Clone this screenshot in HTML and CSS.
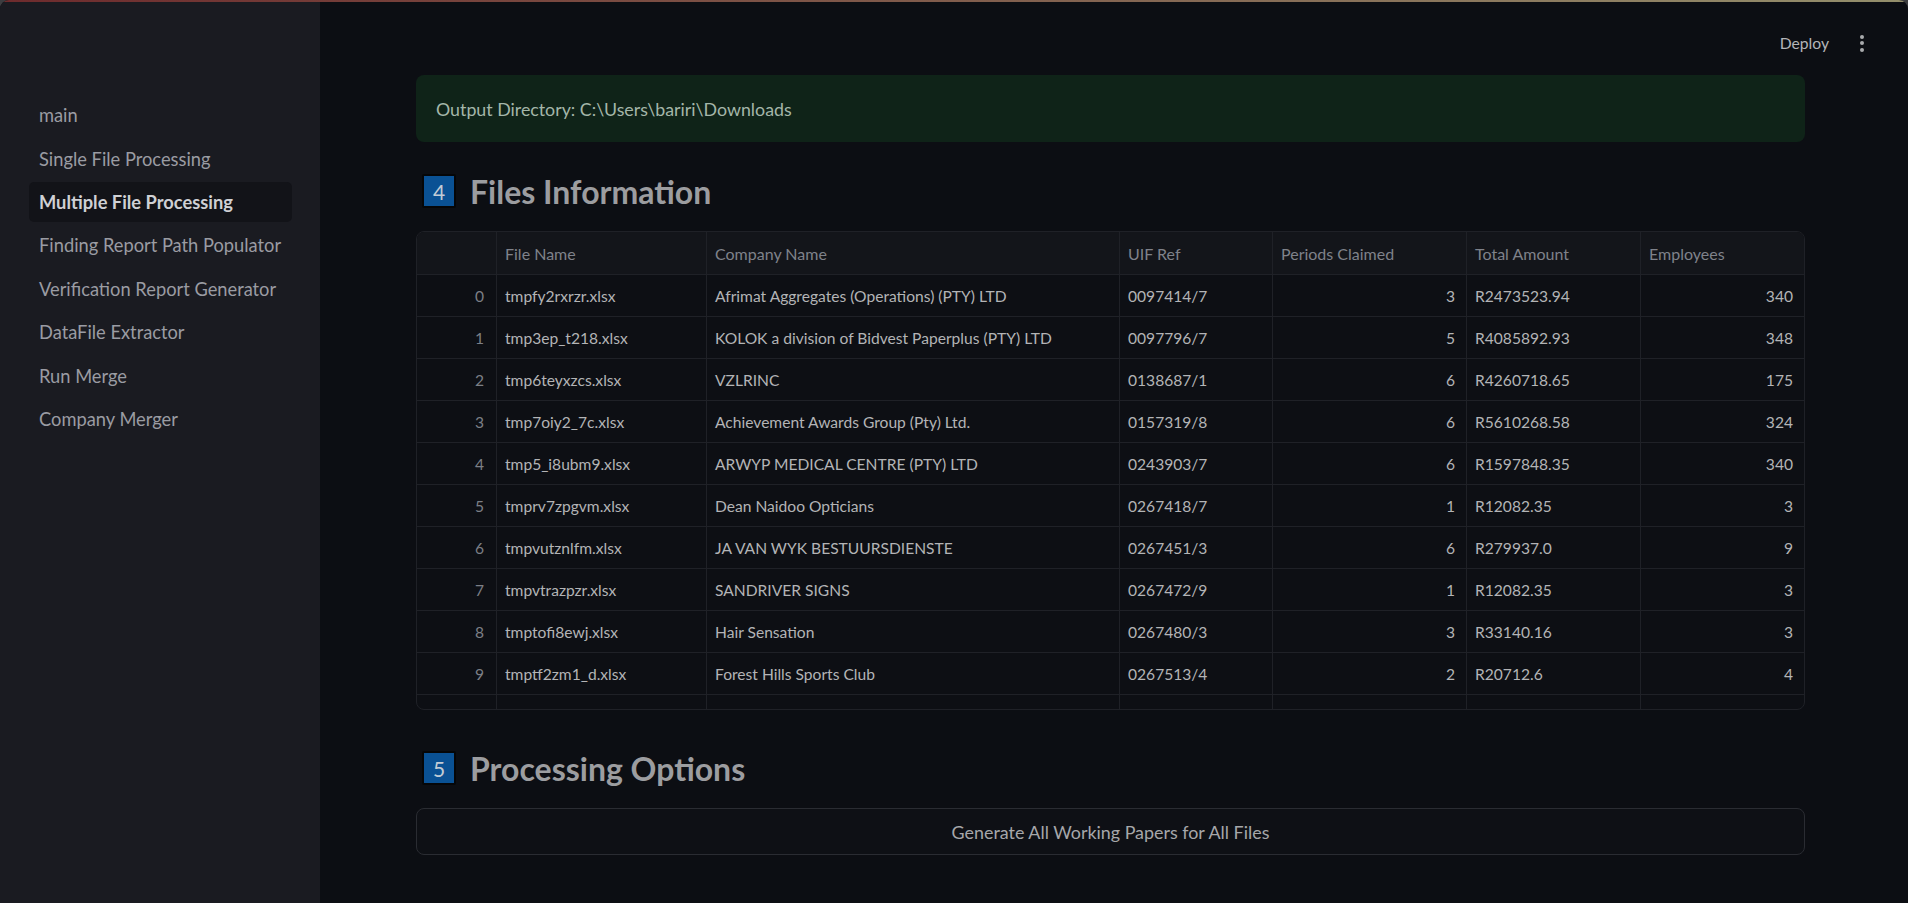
FILE: index.html
```html
<!DOCTYPE html>
<html lang="en">
<head>
<meta charset="utf-8">
<title>Multiple File Processing</title>
<link rel="stylesheet" href="styles.css">
</head>
<body>
<div class="app">
  <div class="decoration"></div>
  <aside class="sidebar">
    <nav class="nav">
      <a class="nav-item">main</a>
      <a class="nav-item">Single File Processing</a>
      <a class="nav-item active">Multiple File Processing</a>
      <a class="nav-item">Finding Report Path Populator</a>
      <a class="nav-item">Verification Report Generator</a>
      <a class="nav-item">DataFile Extractor</a>
      <a class="nav-item">Run Merge</a>
      <a class="nav-item">Company Merger</a>
    </nav>
  </aside>
  <main class="main">
    <div class="toolbar">
      <span class="deploy">Deploy</span>
      <span class="kebab"><i></i><i></i><i></i></span>
    </div>
    <div class="content">
      <div class="alert-success">Output Directory: C:\Users\bariri\Downloads</div>

      <h2 class="heading"><span class="keycap">4</span><span>Files Information</span></h2>

      <div class="grid-table">
        <div class="row head">
          <div class="cell idx"></div>
          <div class="cell">File Name</div>
          <div class="cell">Company Name</div>
          <div class="cell">UIF Ref</div>
          <div class="cell">Periods Claimed</div>
          <div class="cell">Total Amount</div>
          <div class="cell">Employees</div>
        </div>
        <div class="row"><div class="cell idx">0</div><div class="cell">tmpfy2rxrzr.xlsx</div><div class="cell">Afrimat Aggregates (Operations) (PTY) LTD</div><div class="cell">0097414/7</div><div class="cell num">3</div><div class="cell">R2473523.94</div><div class="cell num">340</div></div>
        <div class="row"><div class="cell idx">1</div><div class="cell">tmp3ep_t218.xlsx</div><div class="cell">KOLOK a division of Bidvest Paperplus (PTY) LTD</div><div class="cell">0097796/7</div><div class="cell num">5</div><div class="cell">R4085892.93</div><div class="cell num">348</div></div>
        <div class="row"><div class="cell idx">2</div><div class="cell">tmp6teyxzcs.xlsx</div><div class="cell">VZLRINC</div><div class="cell">0138687/1</div><div class="cell num">6</div><div class="cell">R4260718.65</div><div class="cell num">175</div></div>
        <div class="row"><div class="cell idx">3</div><div class="cell">tmp7oiy2_7c.xlsx</div><div class="cell">Achievement Awards Group (Pty) Ltd.</div><div class="cell">0157319/8</div><div class="cell num">6</div><div class="cell">R5610268.58</div><div class="cell num">324</div></div>
        <div class="row"><div class="cell idx">4</div><div class="cell">tmp5_i8ubm9.xlsx</div><div class="cell">ARWYP MEDICAL CENTRE (PTY) LTD</div><div class="cell">0243903/7</div><div class="cell num">6</div><div class="cell">R1597848.35</div><div class="cell num">340</div></div>
        <div class="row"><div class="cell idx">5</div><div class="cell">tmprv7zpgvm.xlsx</div><div class="cell">Dean Naidoo Opticians</div><div class="cell">0267418/7</div><div class="cell num">1</div><div class="cell">R12082.35</div><div class="cell num">3</div></div>
        <div class="row"><div class="cell idx">6</div><div class="cell">tmpvutznlfm.xlsx</div><div class="cell">JA VAN WYK BESTUURSDIENSTE</div><div class="cell">0267451/3</div><div class="cell num">6</div><div class="cell">R279937.0</div><div class="cell num">9</div></div>
        <div class="row"><div class="cell idx">7</div><div class="cell">tmpvtrazpzr.xlsx</div><div class="cell">SANDRIVER SIGNS</div><div class="cell">0267472/9</div><div class="cell num">1</div><div class="cell">R12082.35</div><div class="cell num">3</div></div>
        <div class="row"><div class="cell idx">8</div><div class="cell">tmptofi8ewj.xlsx</div><div class="cell">Hair Sensation</div><div class="cell">0267480/3</div><div class="cell num">3</div><div class="cell">R33140.16</div><div class="cell num">3</div></div>
        <div class="row"><div class="cell idx">9</div><div class="cell">tmptf2zm1_d.xlsx</div><div class="cell">Forest Hills Sports Club</div><div class="cell">0267513/4</div><div class="cell num">2</div><div class="cell">R20712.6</div><div class="cell num">4</div></div>
        <div class="row"><div class="cell idx">10</div><div class="cell">tmpkdhl1tbf.xlsx</div><div class="cell">Al Hilal Properties</div><div class="cell">0267521/5</div><div class="cell num">4</div><div class="cell">R54210.8</div><div class="cell num">6</div></div>
      </div>

      <h2 class="heading second"><span class="keycap">5</span><span>Processing Options</span></h2>

      <button class="btn">Generate All Working Papers for All Files</button>
    </div>
  </main>
</div>
</body>
</html>
```

FILE: styles.css
```css
* { box-sizing: border-box; }

html, body {
  margin: 0;
  padding: 0;
  background: #3c3d40;
  height: 903px;
  overflow: hidden;
}

body {
  font-family: "Lato", "Noto Sans", sans-serif;
}

.app {
  position: relative;
  display: flex;
  width: 1908px;
  height: 903px;
  border-radius: 9px 9px 0 0;
  overflow: hidden;
  background: #0c0e13;
}

.decoration {
  position: absolute;
  top: 0;
  left: 0;
  right: 0;
  height: 2px;
  background: linear-gradient(90deg, #6e2b2d, #948f6c);
  z-index: 5;
}

/* Sidebar */
.sidebar {
  width: 320px;
  flex: 0 0 320px;
  background: #1a1b21;
  padding: 95.5px 28px 0 29px;
}

.nav {
  display: flex;
  flex-direction: column;
  gap: 4px;
}

.nav-item {
  display: flex;
  align-items: center;
  height: 39.4px;
  padding-left: 10px;
  border-radius: 5px;
  font-size: 18.3px;
  color: #9a9ca3;
}

.nav-item.active {
  background: #121318;
  color: #cfd0d4;
  font-weight: 700;
}

/* Main */
.main {
  position: relative;
  flex: 1;
}

.toolbar {
  position: absolute;
  top: 26px;
  right: 44px;
  display: flex;
  align-items: center;
  gap: 31px;
  height: 34px;
}

.deploy {
  font-size: 15.7px;
  color: #b4b5b8;
}

.kebab {
  display: flex;
  flex-direction: column;
  gap: 2.5px;
  align-items: center;
}

.kebab i {
  display: block;
  width: 4px;
  height: 4px;
  border-radius: 50%;
  background: #a9aaad;
}

.content {
  width: 1389px;
  margin-left: 96px;
  padding-top: 75px;
}

.alert-success {
  height: 67px;
  display: flex;
  align-items: center;
  padding-left: 20px;
  border-radius: 8px;
  background: #0f2318;
  color: #a4b6a9;
  font-size: 17.8px;
}

.heading {
  display: flex;
  align-items: center;
  gap: 14px;
  height: 50px;
  margin: 24px 0 15px;
  font-size: 32px;
  font-weight: 700;
  color: #9c9da0;
}

.heading.second {
  margin-top: 33px;
}

.keycap {
  display: flex;
  align-items: center;
  justify-content: center;
  width: 34px;
  height: 34px;
  margin-left: 6px;
  background: #0a5194;
  border: 2px solid #050608;
  border-radius: 2px;
  font-size: 21px;
  font-weight: 400;
  color: #c2ccd6;
}

/* Data table */
.grid-table {
  height: 479px;
  border: 1px solid #1f2127;
  border-radius: 8px;
  overflow: hidden;
  background: #0d0f14;
}

.row {
  display: grid;
  grid-template-columns: 80px 210px 413px 153px 194px 174px 1fr;
  height: 42px;
  border-bottom: 1px solid #1f2127;
}

.row.head {
  height: 43px;
  background: #13151a;
}

.cell {
  display: flex;
  align-items: center;
  padding: 0 8px;
  border-right: 1px solid #1f2127;
  font-size: 15.6px;
  color: #b3b4b6;
  white-space: nowrap;
  overflow: hidden;
}

.cell:last-child {
  border-right: none;
}

.head .cell {
  font-size: 16px;
  color: #7f828a;
}

.cell.idx {
  justify-content: flex-end;
  padding-right: 12px;
  color: #7c7f86;
}

.cell.num {
  justify-content: flex-end;
  padding-right: 11px;
}

.btn {
  display: block;
  width: 100%;
  height: 47px;
  margin-top: 0;
  border: 1px solid #2a2c32;
  border-radius: 8px;
  background: #0e1015;
  color: #a6a7aa;
  font-family: "Lato", "Noto Sans", sans-serif;
  font-size: 17.9px;
}
```
